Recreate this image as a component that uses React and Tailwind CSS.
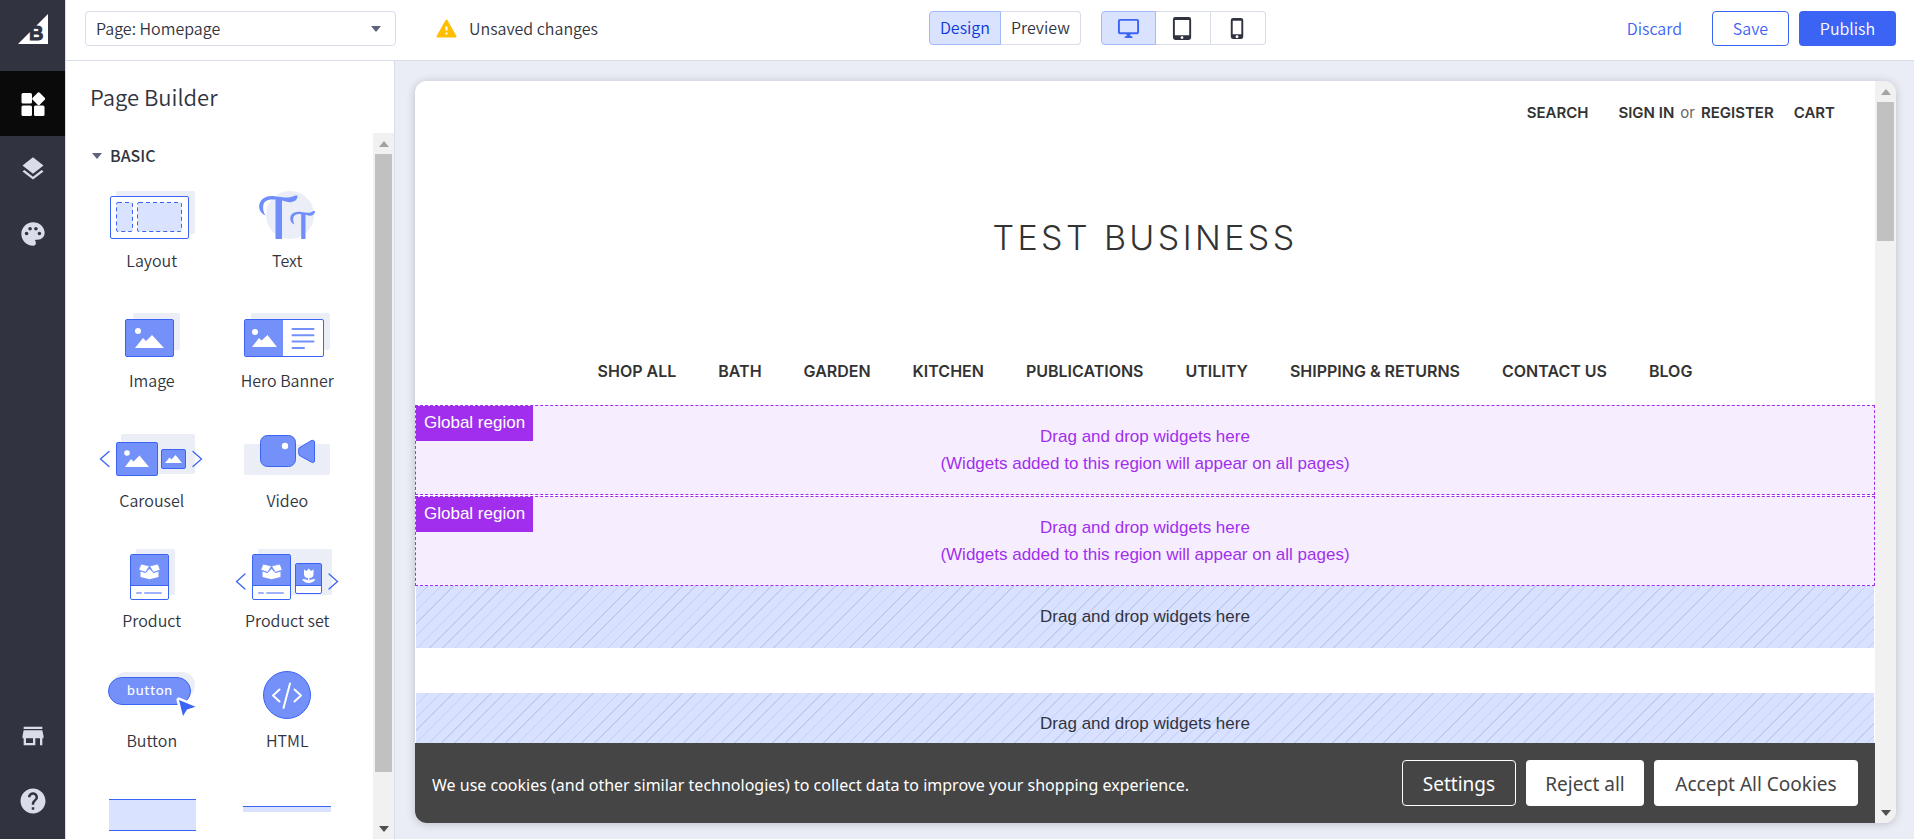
import React, { useState } from 'react';
import clsx from 'clsx';
import {
  MdLayers,
  MdPalette,
  MdStore,
  MdHelp,
  MdOutlineDesktopWindows,
  MdTabletMac,
  MdPhoneIphone,
} from 'react-icons/md';

const BLUE = '#3c64f4';
const FILL = '#7490f9';
const SHADE = '#ebeef7';
const PALE = '#d9e2ff';

/* ---------- widget drawings, all on the same 112x56 canvas ---------- */

const Canvas = ({ children }) => (
  <svg width="112" height="56" viewBox="0 0 112 56" fill="none" aria-hidden="true">
    {children}
  </svg>
);

const Card = ({ x, y, w, h, fill = FILL }) => (
  <rect x={x + 0.5} y={y + 0.5} width={w - 1} height={h - 1} rx="1.5" fill={fill} stroke={BLUE} />
);

const Arrows = ({ left, right, y }) => (
  <g stroke={BLUE} strokeWidth="1.3" strokeLinecap="round">
    <path d={`M${left + 8.5} ${y - 7.5}L${left} ${y}l8.5 7.5`} />
    <path d={`M${right - 8.5} ${y - 7.5}L${right} ${y}l-8.5 7.5`} />
  </g>
);

const OpenBox = ({ x, y }) => (
  <g transform={`translate(${x} ${y})`} fill="#fff">
    <path d="M-9 0L-4 1.5L0 -2.5L4 1.5L9 0V5.5L0 7.8L-9 5.5Z" />
    <g stroke={FILL} strokeWidth="0.8">
      <path d="M-8.5 -7.5L0 -5.5L-3.8 0.8L-10.8 -1.5Z" />
      <path d="M8.5 -7.5L0 -5.5L3.8 0.8L10.8 -1.5Z" />
    </g>
  </g>
);

const LayoutArt = () => (
  <Canvas>
    <rect x="20" y="4" width="79" height="43" rx="2" fill={SHADE} />
    <Card x={14} y={9} w={79} h={43} fill="#fff" />
    <g fill={PALE} stroke={BLUE} strokeDasharray="4 3">
      <rect x="20.5" y="15.5" width="16" height="29" rx="1.5" />
      <rect x="41.5" y="15.5" width="44" height="29" rx="1.5" />
    </g>
  </Canvas>
);

const TextArt = () => (
  <Canvas>
    <circle cx="59" cy="28" r="24" fill={SHADE} />
    <g fill="#6f8efb">
      <path d="M34.5 28.5C28 26 26.5 18.5 29.8 14C32.5 10 37.5 8.6 43.5 9.2C51 10 57 11.5 61.5 9.6C63 9 64 8 66.6 8.6C66.6 13 63.5 15 59.5 15.2C56.5 15.3 53.5 14.2 51 13.6V52H44.5V12.6C39.5 12 34.5 12.5 32.8 16.5C31.5 20 32 25 34.5 28.5Z" />
      <path d="M63.5 37.5C59 35.8 58.3 30.5 60.5 27.5C62.5 25 66.5 24.3 70.5 25C74.5 25.7 78.5 26.5 81 24.7C82 24 83 24 84.2 24.3C83.8 27.5 81.5 28.8 78.5 28.7C77 28.6 76 28.2 74.5 27.8V52H70.2V27.2C67 26.6 63.5 27.2 62.5 30C61.8 32.5 62.3 35.5 63.5 37.5Z" />
    </g>
  </Canvas>
);

const ImageArt = () => (
  <Canvas>
    <rect x="37" y="6" width="47" height="37" rx="2" fill={SHADE} />
    <Card x={29} y={12} w={49} h={38} />
    <circle cx="42" cy="24" r="3" fill="#fff" />
    <path d="M39 41L47 31L50 34L56 28L68 41Z" fill="#fff" />
  </Canvas>
);

const HeroArt = () => (
  <Canvas>
    <rect x="20" y="6" width="79" height="37" rx="2" fill={SHADE} />
    <Card x={13} y={12} w={80} h={38} fill="#fff" />
    <path d="M14 13H52V49H14Z" fill={FILL} />
    <circle cx="24" cy="25" r="3" fill="#fff" />
    <path d="M21 40L28 31L30.5 33.5L36.5 28L46 40Z" fill="#fff" />
    <path d="M61.5 22H82.5M61.5 28.2H82.5M61.5 34.5H82.5M61.5 41H73" stroke={FILL} strokeWidth="2" strokeLinecap="round" />
  </Canvas>
);

const CarouselArt = () => (
  <Canvas>
    <rect x="25" y="7" width="74" height="40" rx="2" fill={SHADE} />
    <Card x={20} y={15} w={42} h={34} />
    <Card x={65} y={22} w={25} h={20} />
    <circle cx="31" cy="26" r="2.8" fill="#fff" />
    <path d="M29 40L35 32L37.5 34.5L43.5 28.5L53 40Z" fill="#fff" />
    <path d="M69 36L73.5 30.5L75.5 32.5L79.5 28L86 36Z" fill="#fff" />
    <Arrows left={4.5} right={105.5} y={32} />
  </Canvas>
);

const VideoArt = () => (
  <Canvas>
    <rect x="13" y="17" width="86" height="31" rx="2" fill={SHADE} />
    <rect x="29.5" y="8.5" width="35" height="31" rx="7" fill={FILL} stroke={BLUE} />
    <circle cx="54" cy="19" r="3.2" fill="#fff" />
    <path d="M68 21L80 13.8C82 12.8 83.5 13.5 83.5 15V34C83.5 35.6 82 36 80.5 35.2L68.5 28.5C67.5 27.5 67.3 22 68 21Z" fill={FILL} stroke={BLUE} />
  </Canvas>
);

const ProductArt = () => (
  <Canvas>
    <rect x="40" y="2" width="39" height="46" rx="2" fill={SHADE} />
    <Card x={34} y={7} w={39} h={46} fill="#fff" />
    <path d="M35 8H72V38.5H35Z" fill={FILL} />
    <path d="M34.5 38.5H72.5" stroke={BLUE} />
    <OpenBox x={53.5} y={24.5} />
    <path d="M41 46H45M49 46H65" stroke="#9fb3fc" strokeWidth="2" strokeLinecap="round" />
  </Canvas>
);

const ProductSetArt = () => (
  <Canvas>
    <rect x="27" y="2" width="74" height="46" rx="2" fill={SHADE} />
    <Card x={21} y={7} w={39} h={46} fill="#fff" />
    <path d="M22 8H59V38.5H22Z" fill={FILL} />
    <path d="M21.5 38.5H59.5" stroke={BLUE} />
    <OpenBox x={40.5} y={24.5} />
    <path d="M28 46H32M36 46H52" stroke="#9fb3fc" strokeWidth="2" strokeLinecap="round" />
    <Card x={64} y={16} w={27} h={31} fill="#fff" />
    <path d="M65 17H90V38H65Z" fill={FILL} />
    <path d="M64.5 38.5H90.5" stroke={BLUE} />
    <path
      d="M73 22.5L75.5 24L77.7 21.5L80 24L82.5 22.5V27.5C82.5 30 80.5 31 78.4 31V33.5C80 32.3 82 32 84.5 32.3C83 35 80.5 36 77.7 36C75 36 72.5 35 71 32.3C73.5 32 75.5 32.3 77 33.5V31C75 31 73 30 73 27.5Z"
      fill="#fff"
    />
    <Arrows left={5.5} right={106.5} y={34.5} />
  </Canvas>
);

const ButtonArt = () => (
  <Canvas>
    <rect x="17" y="5" width="82" height="26" rx="13" fill={SHADE} />
    <rect x="12.5" y="10.5" width="82" height="27" rx="13.5" fill={FILL} stroke={BLUE} />
    <text
      x="54"
      y="28"
      textAnchor="middle"
      fill="#fff"
      className="text-[14px] font-medium font-['Lato',sans-serif] tracking-wider"
    >
      button
    </text>
    <path d="M83 33L100 40L91.5 42.5L87.5 50Z" fill={BLUE} stroke="#fff" strokeWidth="5" strokeLinejoin="round" />
    <path d="M83 33L99.5 39.8L91 42.5L87 49Z" fill={BLUE} />
  </Canvas>
);

const HtmlArt = () => (
  <Canvas>
    <circle cx="56" cy="28" r="23.5" fill={FILL} stroke={BLUE} />
    <path d="M48.5 22.5L42 28.5L48.5 34.5M63.5 22.5L70 28.5L63.5 34.5M59 16.5L52.5 41" stroke="#fff" strokeWidth="2" strokeLinecap="round" strokeLinejoin="round" />
  </Canvas>
);

const SpacerArt = () => (
  <Canvas>
    <path d="M13 12H100V44H13Z" fill={PALE} />
    <path d="M13 12.5H100M13 43.5H100" stroke={BLUE} />
  </Canvas>
);

const DividerArt = () => (
  <Canvas>
    <path d="M12 19H100V25H12Z" fill={PALE} />
    <path d="M12 19.5H100" stroke={BLUE} />
  </Canvas>
);

const WIDGETS = [
  { name: 'Layout', art: LayoutArt },
  { name: 'Text', art: TextArt },
  { name: 'Image', art: ImageArt },
  { name: 'Hero Banner', art: HeroArt },
  { name: 'Carousel', art: CarouselArt },
  { name: 'Video', art: VideoArt },
  { name: 'Product', art: ProductArt },
  { name: 'Product set', art: ProductSetArt },
  { name: 'Button', art: ButtonArt },
  { name: 'HTML', art: HtmlArt },
  { art: SpacerArt },
  { art: DividerArt },
];

const NAV_LINKS = [
  'SHOP ALL',
  'BATH',
  'GARDEN',
  'KITCHEN',
  'PUBLICATIONS',
  'UTILITY',
  'SHIPPING & RETURNS',
  'CONTACT US',
  'BLOG',
];

/* ---------- small shared pieces ---------- */

const Caret = ({ className }) => (
  <svg width="10" height="6" viewBox="0 0 10 6" className={className} aria-hidden="true">
    <path d="M0 0H10L5 6Z" fill="currentColor" />
  </svg>
);

const ScrollTrack = ({ thumb }) => (
  <div className="flex w-[21px] shrink-0 flex-col items-center bg-[#f1f1f1]" aria-hidden="true">
    <div className="flex h-[21px] shrink-0 items-center">
      <Caret className="rotate-180 text-[#a3a3a3]" />
    </div>
    <div className="min-h-0 w-full flex-1 px-[2px]">
      <div className={clsx('bg-[#c1c1c1]', thumb)} />
    </div>
    <div className="flex h-[21px] shrink-0 items-center">
      <Caret className="text-[#505050]" />
    </div>
  </div>
);

const RailButton = ({ label, active, children }) => (
  <button
    aria-label={label}
    className={clsx(
      'flex h-[65px] w-full items-center justify-center',
      active ? 'bg-[#0a0a0a] text-white' : 'text-[#d9dce9]'
    )}
  >
    {children}
  </button>
);

const Rail = () => (
  <nav className="flex w-[65px] shrink-0 flex-col bg-[#313440]">
    <div className="flex h-[71px] items-start justify-center pt-[14px]">
      <svg width="30" height="30" viewBox="0 0 30 30" role="img" aria-label="BigCommerce">
        <path d="M30 0V30H0Z" fill="#fff" />
        <text x="11" y="26" fill="#313440" stroke="#313440" strokeWidth="1" className="text-[20px] font-bold font-['Liberation_Sans',sans-serif]">
          B
        </text>
      </svg>
    </div>
    <RailButton label="Widgets" active>
      <svg width="24" height="24" viewBox="0 0 24 24" fill="currentColor">
        <rect x="0.5" y="1" width="10.5" height="10.5" rx="1.5" />
        <rect x="0.5" y="13.5" width="10.5" height="10.5" rx="1.5" />
        <rect x="13" y="13.5" width="10.5" height="10.5" rx="1.5" />
        <rect x="12.7" y="1.7" width="10" height="10" rx="1.5" transform="rotate(45 17.7 6.7)" />
      </svg>
    </RailButton>
    <RailButton label="Layers">
      <MdLayers size={28} />
    </RailButton>
    <RailButton label="Theme styles">
      <MdPalette size={28} />
    </RailButton>
    <div className="mt-auto pb-[6px]">
      <RailButton label="Store">
        <MdStore size={28} />
      </RailButton>
      <RailButton label="Help">
        <MdHelp size={30} />
      </RailButton>
    </div>
  </nav>
);

const TopBar = () => {
  const [mode, setMode] = useState('Design');
  const [device, setDevice] = useState('Desktop');

  const devices = [
    { name: 'Desktop', icon: MdOutlineDesktopWindows },
    { name: 'Tablet', icon: MdTabletMac },
    { name: 'Phone', icon: MdPhoneIphone },
  ];

  return (
    <header className="flex h-[61px] shrink-0 items-start justify-between border-b border-l border-[#d9dce9] bg-white pt-[11px] pr-[18px] pl-[19px]">
      <div className="flex items-center">
        <div className="relative">
          <select
            aria-label="Page"
            className="h-[35px] w-[311px] appearance-none rounded-[4px] border border-[#d9dce9] bg-white px-[10px] pb-[2px] leading-6"
          >
            <option>Page: Homepage</option>
          </select>
          <Caret className="pointer-events-none absolute top-[15px] right-[15px] text-[#5e637a]" />
        </div>
        <div className="ml-10 flex items-center gap-3">
          <svg width="21" height="19" viewBox="0 0 21 19" aria-hidden="true">
            <path d="M10.5 1.5L19.5 17.5H1.5Z" fill="#ffbf00" stroke="#ffbf00" strokeWidth="2" strokeLinejoin="round" />
            <path d="M10.5 7.5V11.5M10.5 13.5V15.5" stroke="#fff" strokeWidth="2" />
          </svg>
          <span className="pb-[2px]">Unsaved changes</span>
        </div>
      </div>

      <div className="flex gap-5">
        <div className="flex h-[34px]">
          {['Design', 'Preview'].map((name) => (
            <button
              key={name}
              onClick={() => setMode(name)}
              className={clsx(
                'border px-[10px] pb-[2px] first:rounded-l-[4px] last:rounded-r-[4px] last:border-l-0',
                mode === name ? 'border-[#a5b8fb] bg-[#d9e2ff] text-[#0b38d9]' : 'border-[#d9dce9]'
              )}
            >
              {name}
            </button>
          ))}
        </div>
        <div className="flex h-[34px]">
          {devices.map(({ name, icon: Icon }) => (
            <button
              key={name}
              aria-label={name}
              onClick={() => setDevice(name)}
              className={clsx(
                'flex w-[55px] items-center justify-center border border-l-0 first:rounded-l-[4px] first:border-l last:rounded-r-[4px]',
                device === name ? 'border-[#a5b8fb] bg-[#d9e2ff] text-[#3c64f4]' : 'border-[#d9dce9]'
              )}
            >
              <Icon size={23} />
            </button>
          ))}
        </div>
      </div>

      <div className="flex h-[35px]">
        <button className="px-[30px] pb-[2px] text-[#3c64f4]">Discard</button>
        <button className="w-[77px] rounded-[4px] border border-[#3c64f4] pb-[2px] text-[#3c64f4]">Save</button>
        <button className="ml-[10px] w-[97px] rounded-[4px] bg-[#3c64f4] pb-[2px] text-white">Publish</button>
      </div>
    </header>
  );
};

const WidgetPanel = () => (
  <aside className="flex w-[330px] shrink-0 flex-col border-r border-l border-[#d9dce9] bg-white">
    <h1 className="h-[72px] shrink-0 pt-[19px] pl-[24px] text-[22px] leading-8">Page Builder</h1>
    <div className="flex min-h-0 flex-1">
      <div className="min-w-0 flex-1 overflow-hidden">
        <button className="flex h-[46px] items-center gap-2 pl-[26px] font-medium">
          <Caret className="text-[#5e637a]" />
          <span className="pb-[2px]">BASIC</span>
        </button>
        <ul className="mt-2 grid grid-cols-2 px-[18px]">
          {WIDGETS.map(({ name, art: Art }, idx) => (
            <li key={idx} className="flex h-[120px] flex-col items-center gap-[7px]">
              <Art />
              {name && <span className="leading-5">{name}</span>}
            </li>
          ))}
        </ul>
      </div>
      <ScrollTrack thumb="h-[93%]" />
    </div>
  </aside>
);

const GlobalRegion = () => (
  <section className="relative h-[90px] border border-dashed border-[#a12eed] bg-[#f6eefe] pt-[17px] text-center leading-[27px] text-[#a12eed]">
    <span className="absolute top-0 left-0 h-[35px] bg-[#a12eed] px-2 leading-[34px] text-white">
      Global region
    </span>
    <p>Drag and drop widgets here</p>
    <p>(Widgets added to this region will appear on all pages)</p>
  </section>
);

const DropZone = () => (
  <section className="mx-px flex h-[62px] shrink-0 items-center justify-center bg-[#d8e1ff] bg-[repeating-linear-gradient(135deg,transparent_0px,transparent_8px,#c3cdf0_8px,#c3cdf0_9px)] text-[#313440]">
    Drag and drop widgets here
  </section>
);

const Storefront = () => (
  <div className="relative min-w-0 flex-1 overflow-hidden bg-white font-['Liberation_Sans',Arial,sans-serif] text-[17px] font-normal text-[#333]">
    <div className="flex h-16 items-center justify-end pr-10 font-['Inter',sans-serif] text-[15px] font-semibold">
      <a href="#search" className="mr-[30px]">SEARCH</a>
      <a href="#login">SIGN IN</a>
      <span className="mx-[6px] font-normal text-[#666]">or</span>
      <a href="#register" className="mr-5">REGISTER</a>
      <a href="#cart">CART</a>
    </div>
    <div className="flex h-[184px] items-center justify-center">
      <a href="#home" className="font-['Inter',sans-serif] text-[34px] font-light tracking-widest">
        TEST BUSINESS
      </a>
    </div>
    <nav className="flex h-[76px] items-center justify-center gap-[42px] pt-2 font-['Inter',sans-serif] text-[16px] font-semibold">
      {NAV_LINKS.map((link) => (
        <a key={link} href="#shop" className="whitespace-nowrap">
          {link}
        </a>
      ))}
    </nav>
    <div className="flex flex-col gap-px">
      <GlobalRegion />
      <GlobalRegion />
    </div>
    <DropZone />
    <div className="h-[45px]" />
    <DropZone />

    {/* cookie banner floats over the page bottom */}
    <div className="absolute inset-x-0 bottom-0 flex h-20 items-center bg-[#454545] px-[17px] font-['Noto_Sans',sans-serif] text-[16px] text-white">
      <p className="mr-auto pt-1">
        We use cookies (and other similar technologies) to collect data to improve your shopping experience.
      </p>
      <div className="flex h-[46px] gap-[10px] text-[19px]">
        <button className="w-[114px] rounded-[4px] border border-white pt-[2px]">Settings</button>
        <button className="w-[118px] rounded-[4px] bg-white pt-[2px] text-[#454545]">Reject all</button>
        <button className="w-[204px] rounded-[4px] bg-white pt-[2px] text-[#454545]">Accept All Cookies</button>
      </div>
    </div>
  </div>
);

export default function App() {
  return (
    <div className="flex h-screen overflow-hidden font-['Noto_Sans_CJK_SC',sans-serif] text-[16px] font-[350] text-[#313440]">
      <Rail />
      <div className="flex min-w-0 flex-1 flex-col">
        <TopBar />
        <div className="flex min-h-0 flex-1">
          <WidgetPanel />
          <main className="flex min-w-0 flex-1 bg-[#eaedf6] pt-5 pr-[18px] pb-4 pl-5">
            <div className="flex min-w-0 flex-1 overflow-hidden rounded-xl shadow-[0_1px_10px_rgba(0,0,0,0.2)]">
              <Storefront />
              <ScrollTrack thumb="h-[139px]" />
            </div>
          </main>
        </div>
      </div>
    </div>
  );
}
